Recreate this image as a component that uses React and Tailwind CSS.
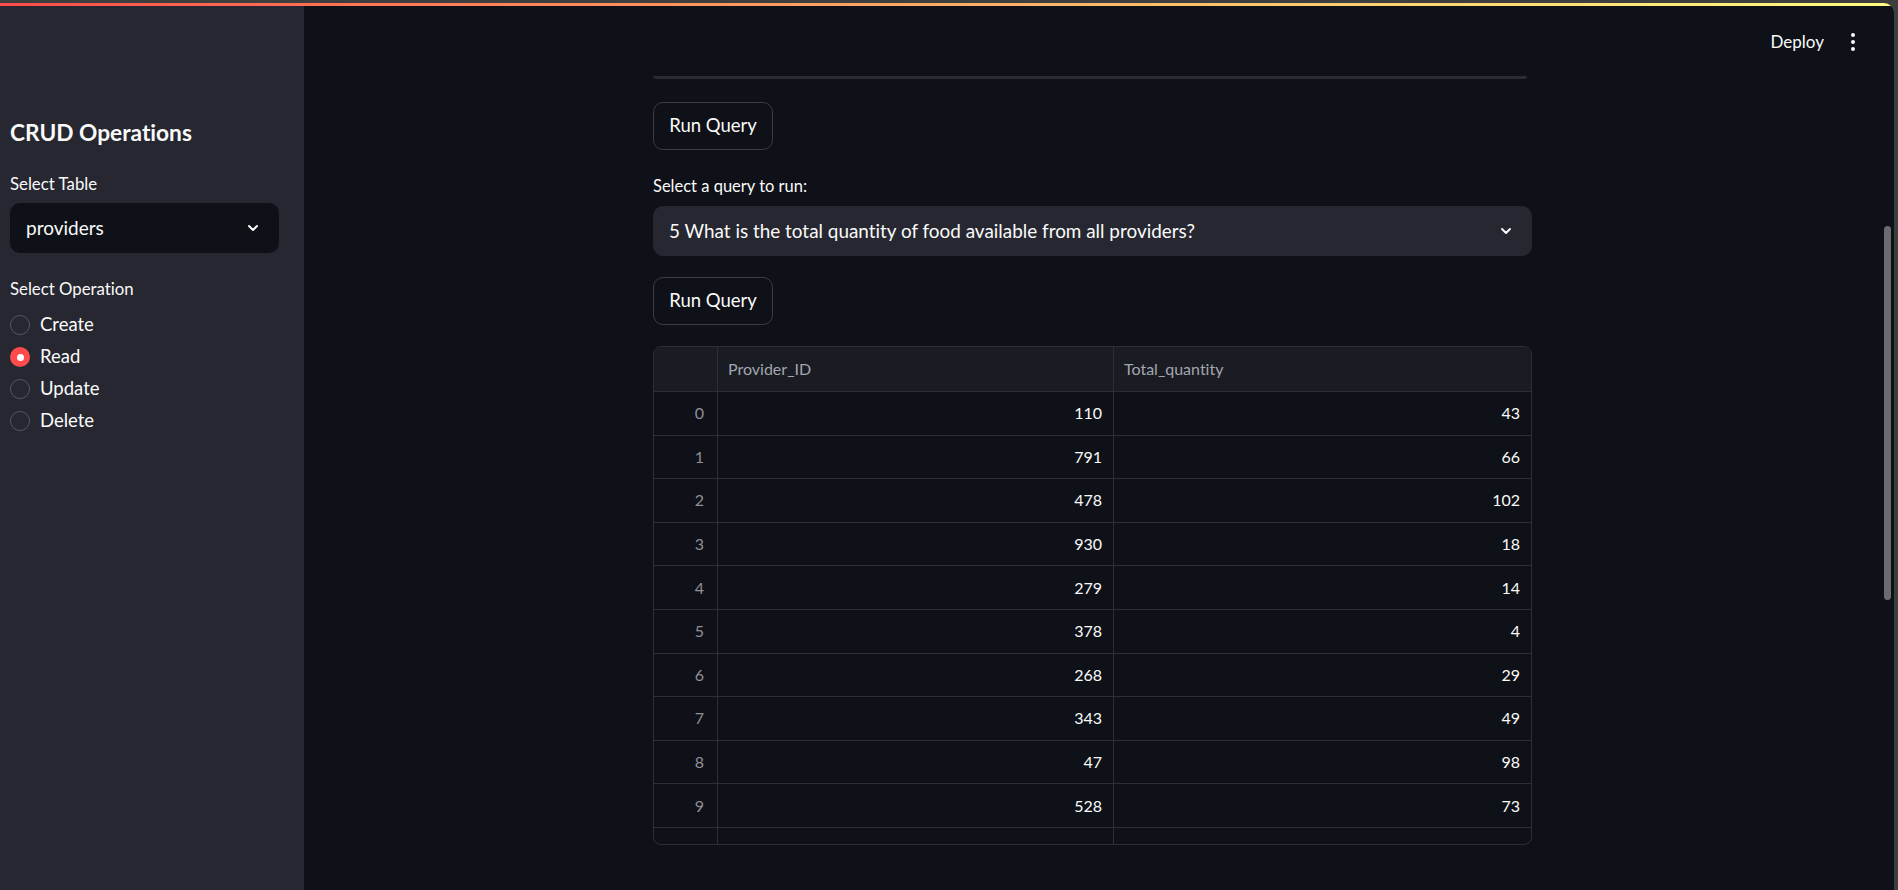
const rows = [
  [110, 43],
  [791, 66],
  [478, 102],
  [930, 18],
  [279, 14],
  [378, 4],
  [268, 29],
  [343, 49],
  [47, 98],
  [528, 73],
];

const ops = ["Create", "Read", "Update", "Delete"];

function Chevron() {
  return (
    <svg width="16" height="16" viewBox="0 0 24 24" fill="none" stroke="#fafafa" strokeWidth="3" strokeLinecap="round" strokeLinejoin="round">
      <path d="M6 9l6 6 6-6" />
    </svg>
  );
}

function RunButton() {
  return (
    <button className="h-[48px] w-[120px] rounded-[10px] border border-[#3b3d46] bg-[#0e1117] text-[18.5px] text-[#fafafa]">
      Run Query
    </button>
  );
}

export default function App() {
  const selected = "Read";

  return (
    <div className="h-[890px] w-full overflow-hidden bg-[#3e3e3e] pt-[3px] pr-[4px] font-['Lato',sans-serif] [font-variant-ligatures:none]">
      <div className="flex h-full flex-col overflow-hidden rounded-tr-[10px]">
        {/* top decoration */}
        <div className="h-[3px] shrink-0 bg-linear-to-r from-[#ff4b4b] to-[#fffd80]" />

        <div className="flex min-h-0 flex-1">
          {/* Sidebar */}
          <aside className="w-[304px] shrink-0 bg-[#262730] px-[10px] pt-[109px]">
            <h2 className="h-[36px] text-[22.7px] font-bold leading-[36px] text-[#fafafa]">
              CRUD Operations
            </h2>
            <p className="mt-[23px] h-[20px] text-[16.8px] leading-[20px] text-[#fafafa]">
              Select Table
            </p>
            <div className="mt-[9px] flex h-[50px] w-[269px] items-center justify-between rounded-[10px] bg-[#0e1117] pl-[16px] pr-[18px]">
              <span className="text-[19px] text-[#fafafa]">providers</span>
              <Chevron />
            </div>
            <p className="mt-[26px] h-[20px] text-[16.8px] leading-[20px] text-[#fafafa]">
              Select Operation
            </p>
            <div className="mt-[10px] flex flex-col">
              {ops.map((op) => (
                <div key={op} className="flex h-[32px] items-center gap-[10px]">
                  {op === selected ? (
                    <span className="flex h-[20px] w-[20px] items-center justify-center rounded-full bg-[#ff4b4b]">
                      <span className="h-[7px] w-[7px] rounded-full bg-white" />
                    </span>
                  ) : (
                    <span className="h-[20px] w-[20px] rounded-full border-[1.5px] border-[#55575f]" />
                  )}
                  <span className="text-[18.5px] text-[#fafafa]">{op}</span>
                </div>
              ))}
            </div>
          </aside>

          {/* Main */}
          <main className="relative flex-1 bg-[#0e1117]">
            {/* header */}
            <div className="absolute right-[39px] top-[24px] flex h-[24px] items-center gap-[27px]">
              <span className="text-[17px] text-[#fafafa]">Deploy</span>
              <div className="flex flex-col items-center gap-[3px]">
                <span className="h-[4px] w-[4px] rounded-full bg-[#fafafa]" />
                <span className="h-[4px] w-[4px] rounded-full bg-[#fafafa]" />
                <span className="h-[4px] w-[4px] rounded-full bg-[#fafafa]" />
              </div>
            </div>

            {/* scrollbar */}
            <div className="absolute right-[3px] top-[220px] h-[374px] w-[7px] rounded-full bg-[#6b6c70]" />

            <div className="ml-[349px] w-[879px] pt-[70px]">
              <div className="h-[3px] w-[874px] rounded-b-[6px] bg-[#2a2b34]" />

              <div className="mt-[23px]">
                <RunButton />
              </div>

              <p className="mt-[26px] h-[20px] text-[16.5px] leading-[20px] text-[#fafafa]">
                Select a query to run:
              </p>
              <div className="mt-[10px] flex h-[50px] items-center justify-between rounded-[10px] bg-[#262730] pl-[16px] pr-[18px]">
                <span className="text-[18.9px] text-[#fafafa]">
                  5 What is the total quantity of food available from all providers?
                </span>
                <Chevron />
              </div>

              <div className="mt-[21px]">
                <RunButton />
              </div>

              {/* data table */}
              <div className="mt-[21px] h-[499px] overflow-hidden rounded-[8px] border border-[#2d2f37]">
                <div className="grid h-[45px] grid-cols-[64px_396px_1fr] border-b border-[#2d2f37] bg-[#1a1c24] text-[16px] text-[#a3a6ae]">
                  <div className="border-r border-[#2d2f37]" />
                  <div className="flex items-center border-r border-[#2d2f37] px-[10px]">Provider_ID</div>
                  <div className="flex items-center px-[10px]">Total_quantity</div>
                </div>
                {rows.map(([id, qty], i) => (
                  <div
                    key={i}
                    className="grid h-[43.6px] grid-cols-[64px_396px_1fr] border-b border-[#2d2f37] text-[16px]"
                  >
                    <div className="flex items-center justify-end border-r border-[#2d2f37] pr-[13px] text-[#8e9097]">
                      {i}
                    </div>
                    <div className="flex items-center justify-end border-r border-[#2d2f37] pr-[11px] text-[#fafafa]">
                      {id}
                    </div>
                    <div className="flex items-center justify-end pr-[11px] text-[#fafafa]">{qty}</div>
                  </div>
                ))}
                <div className="grid h-[43.6px] grid-cols-[64px_396px_1fr]">
                  <div className="border-r border-[#2d2f37]" />
                  <div className="border-r border-[#2d2f37]" />
                  <div />
                </div>
              </div>
            </div>
          </main>
        </div>
      </div>
    </div>
  );
}
